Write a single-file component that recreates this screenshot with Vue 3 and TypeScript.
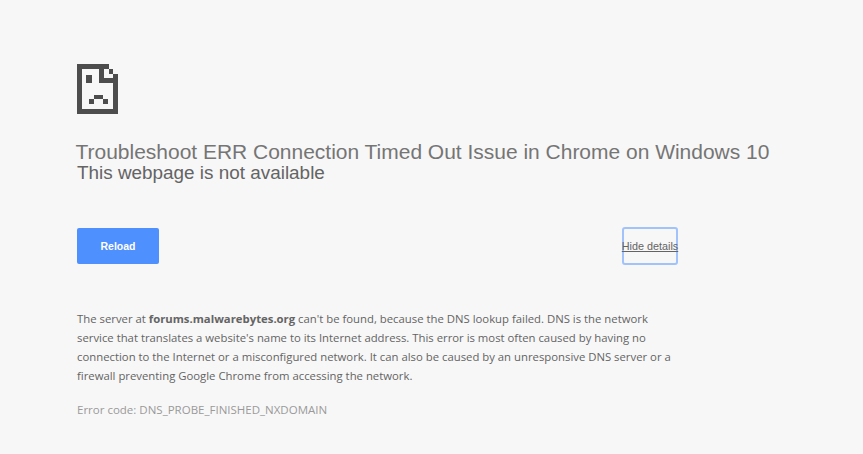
<script setup lang="ts">
const pieces: [number, number, number, number][] = [
  [77, 64, 32, 5],
  [77, 64, 5, 50],
  [77, 109, 41, 5],
  [113, 74, 5, 40],
  [109, 69, 4, 5],
  [99, 64, 5, 19],
  [99, 78, 15, 5],
  [86, 75, 6, 8],
  [94, 95, 9, 4],
  [89, 99, 5, 5],
  [103, 99, 5, 5],
]
</script>

<template>
  <main class="page">
    <svg class="sad" width="41" height="50" viewBox="77 64 41 50" aria-hidden="true">
      <rect v-for="(p, i) in pieces" :key="i" :x="p[0]" :y="p[1]" :width="p[2]" :height="p[3]" fill="#4d4d4d" />
    </svg>
    <h1 class="title">Troubleshoot ERR Connection Timed Out Issue in Chrome on Windows 10</h1>
    <h2 class="sub">This webpage is not available</h2>
    <div class="actions">
      <button class="reload" type="button">Reload</button>
      <a class="details" href="#">Hide details</a>
    </div>
    <p class="desc">
      The server at <strong>forums.malwarebytes.org</strong> can't be found, because the DNS lookup failed. DNS is the network<br />
      service that translates a website's name to its Internet address. This error is most often caused by having no<br />
      connection to the Internet or a misconfigured network. It can also be caused by an unresponsive DNS server or a<br />
      firewall preventing Google Chrome from accessing the network.
    </p>
    <p class="code">Error code: DNS_PROBE_FINISHED_NXDOMAIN</p>
  </main>
</template>

<style>
html, body { margin: 0; background: #f7f7f7; }
</style>

<style scoped>
.page {
  box-sizing: border-box;
  width: 863px;
  height: 454px;
  padding: 64px 0 0 77px;
  background: #f7f7f7;
  overflow: hidden;
}
.sad { display: block; }
.title, .sub {
  margin: 0;
  font-family: "Liberation Sans", Arial, sans-serif;
  font-weight: 400;
  white-space: nowrap;
}
.title { margin: 26px 0 0 -1.5px; font-size: 20.97px; line-height: 23px; color: #757575; }
.sub { color: #646464; font-size: 18.9px; line-height: 20px; }
.actions {
  display: flex;
  align-items: stretch;
  justify-content: space-between;
  width: 601px;
  height: 36px;
  margin-top: 45px;
}
.reload {
  width: 82px;
  padding: 0;
  border: 0;
  border-radius: 2px;
  background: #4d90fe;
  color: #fff;
  font-family: "Liberation Sans", Arial, sans-serif;
  font-size: 10.5px;
  font-weight: 700;
}
.details {
  box-sizing: border-box;
  display: flex;
  align-items: center;
  justify-content: center;
  width: 56px;
  margin: -1px 0;
  border: 2px solid #a2c2fb;
  border-radius: 3px;
  color: #646464;
  font-family: "Liberation Sans", Arial, sans-serif;
  font-size: 10.8px;
  white-space: nowrap;
}
.desc, .code {
  margin: 0;
  font-family: "Open Sans", "Noto Sans", sans-serif;
  line-height: 19px;
  white-space: nowrap;
}
.desc { margin-top: 45px; color: #646464; font-size: 11.34px; }
.desc strong { font-weight: 700; }
.code { margin-top: 15px; color: #9a9a9a; font-size: 11.5px; }
</style>
